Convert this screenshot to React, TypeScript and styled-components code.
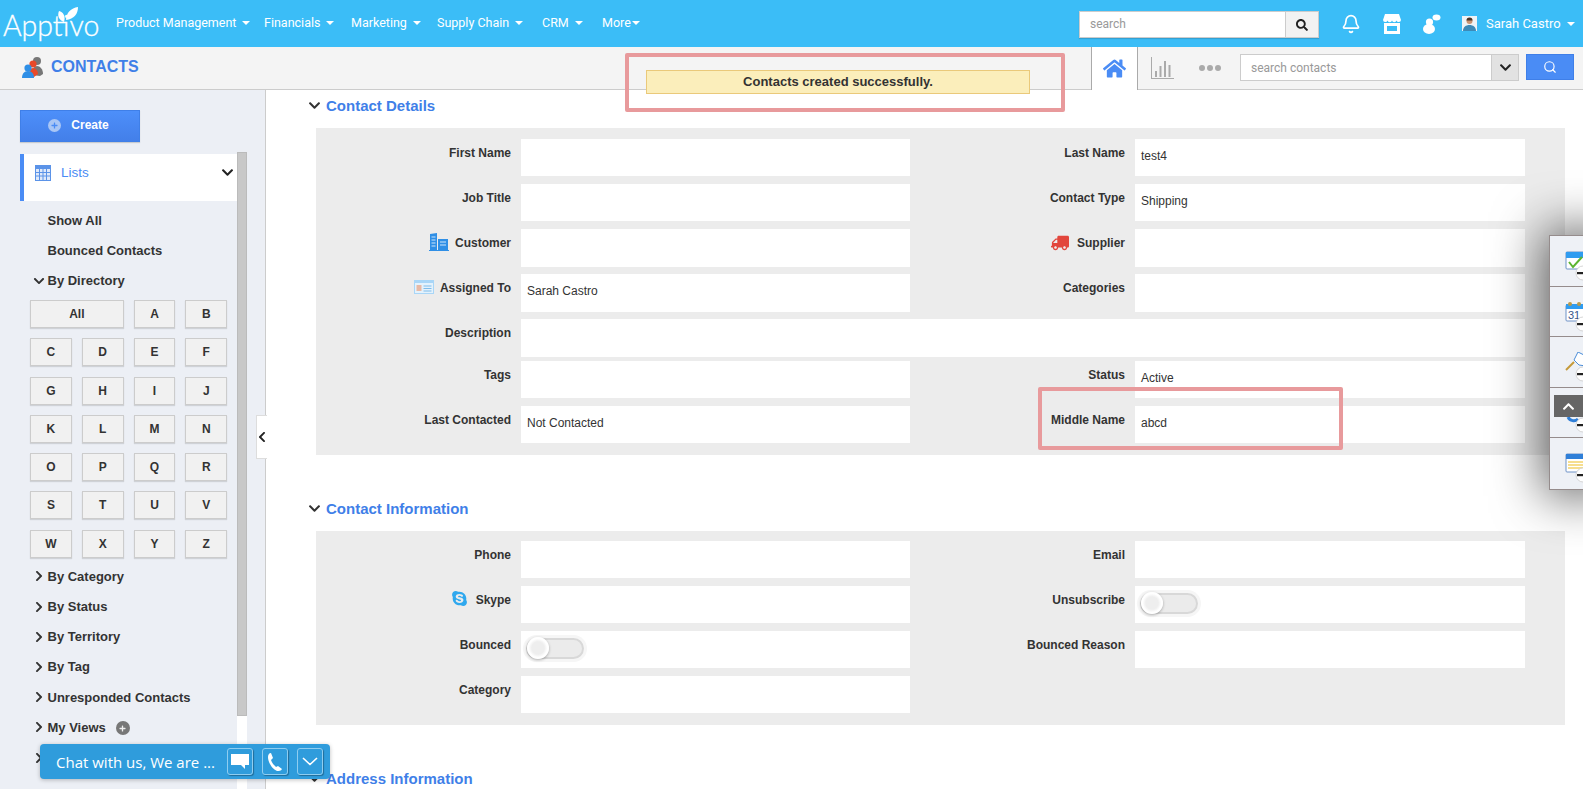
import React from 'react';
import styled, { createGlobalStyle } from 'styled-components';
import { FaChevronDown, FaChevronLeft, FaChevronRight, FaChevronUp, FaHome, FaPlus, FaSearch, FaSkype, FaTruck } from 'react-icons/fa';
import { Bell, Search } from 'lucide-react';

const Global = createGlobalStyle`
  html, body { margin: 0; padding: 0; height: 100%; background: #fff; overflow: hidden; }
  body { font-family: "Liberation Sans", Arial, sans-serif; font-size: 12px; color: #333; }
  * { box-sizing: border-box; }
`;

const Page = styled.div`
  position: relative;
  width: 1583px;
  height: 789px;
  display: flex;
  flex-direction: column;
  overflow: hidden;
`;

/* top bar */
const TopBar = styled.header`
  height: 47px;
  flex: none;
  background: #3bbdf7;
  display: flex;
  align-items: center;
  color: #fff;
`;
const Logo = styled.div`
  position: relative;
  width: 116px;
  padding: 3px 0 0 3px;
  font-family: Lato, sans-serif;
  font-weight: 300;
  font-size: 28.5px;
  line-height: 44px;
  -webkit-text-stroke: 0.3px #fff;
  svg { position: absolute; left: 57px; top: 7px; }
`;
const Nav = styled.nav`
  display: flex;
  align-items: center;
  flex: 1;
`;
const NavItem = styled.span<{ $w: number }>`
  width: ${p => p.$w}px;
  font-family: Roboto, sans-serif;
  font-size: 12.5px;
  white-space: nowrap;
  padding-bottom: 3px;
`;
const Caret = styled.i`
  display: inline-block;
  margin-left: 6px;
  vertical-align: 2px;
  border-left: 4px solid transparent;
  border-right: 4px solid transparent;
  border-top: 4px solid #fff;
`;
const MoreCaret = styled(Caret)`
  margin-left: 1px;
`;
const TopSearch = styled.div`
  width: 240px;
  height: 27px;
  margin: 2px 22px 0 0;
  display: flex;
  background: #fff;
  border: 1px solid #ccc;
  box-shadow: 0 1px 1px rgba(0,0,0,.15);
`;
const TopSearchText = styled.div`
  flex: 1;
  padding-left: 10px;
  line-height: 25px;
  font-family: Roboto, sans-serif;
  color: #999;
  font-size: 12px;
`;
const TopSearchBtn = styled.div`
  width: 33px;
  background: #f2f2f2;
  border-left: 1px solid #ccc;
  display: flex;
  align-items: center;
  justify-content: center;
  color: #222;
`;
const TopIcons = styled.div`
  display: flex;
  align-items: center;
  gap: 22px;
  width: 121px;
`;
const UserName = styled.div`
  display: flex;
  align-items: center;
  font-family: Roboto, sans-serif;
  font-size: 13px;
  gap: 9px;
  width: 121px;
  i { margin-left: -3px; vertical-align: 0; }
`;

/* second bar */
const SubBar = styled.div`
  height: 43px;
  flex: none;
  background: #f4f4f4;
  border-bottom: 1px solid #ccc;
  display: flex;
  align-items: stretch;
`;
const AppTitle = styled.div`
  display: flex;
  align-items: center;
  gap: 7px;
  padding: 0 0 2px 22px;
  width: 1091px;
  color: #3f7fe8;
  font-size: 16px;
  font-weight: bold;
`;
const HomeTab = styled.div`
  width: 47px;
  background: #fff;
  border-left: 1px solid #aaa;
  border-right: 1px solid #aaa;
  margin-bottom: -1px;
  display: flex;
  align-items: center;
  justify-content: center;
  color: #4a8cf5;
`;
const ChartTab = styled.div`
  width: 50px;
  display: flex;
  align-items: center;
  justify-content: center;
  padding-right: 2px;
`;
const DotsTab = styled.div`
  width: 52px;
  display: flex;
  align-items: center;
  gap: 2px;
  padding-left: 11px;
`;
const Dot = styled.i`
  width: 6px;
  height: 6px;
  border-radius: 50%;
  background: #aaa;
`;
const SubSearch = styled.div`
  margin-top: 7px;
  width: 279px;
  height: 27px;
  display: flex;
  border: 1px solid #ccc;
  background: #fff;
`;
const SubSearchText = styled.div`
  flex: 1;
  padding-left: 10px;
  line-height: 27px;
  font-family: Roboto, sans-serif;
  color: #999;
  font-size: 12px;
`;
const SubSearchDrop = styled.div`
  width: 27px;
  background: #e2e2e2;
  border-left: 1px solid #ccc;
  display: flex;
  align-items: center;
  justify-content: center;
  color: #222;
`;
const SubSearchBtn = styled.div`
  margin: 7px 0 0 7px;
  width: 48px;
  height: 26px;
  background: #4a8cf5;
  border: 1px solid #3f7fe8;
  display: flex;
  align-items: center;
  justify-content: center;
  color: #fff;
`;

/* body */
const Body = styled.div`
  flex: 1;
  display: flex;
  min-height: 0;
`;
const Sidebar = styled.aside`
  width: 266px;
  flex: none;
  background: #eceff5;
  border-right: 1px solid #ccc;
  padding: 20px 0 0 20px;
`;
const CreateBtn = styled.div`
  width: 120px;
  height: 32px;
  background: linear-gradient(#4d8ffa, #437fe9);
  border: 1px solid #3f7fe8;
  color: #fff;
  font-weight: bold;
  display: flex;
  align-items: center;
  justify-content: center;
  gap: 10px;
  padding: 0 3px 2px 0;
  box-shadow: 0 1px 1px rgba(0,0,0,.15);
`;
const PlusDot = styled.span<{ $bg: string; $c: string; $s: number }>`
  width: ${p => p.$s}px;
  height: ${p => p.$s}px;
  border-radius: 50%;
  background: ${p => p.$bg};
  color: ${p => p.$c};
  display: inline-flex;
  align-items: center;
  justify-content: center;
  font-size: 8px;
`;
const ViewsPlus = styled(PlusDot)`
  margin: 2px 0 0 10px;
`;
const SideBody = styled.div`
  margin-top: 12px;
  display: flex;
  align-items: flex-start;
`;
const SideList = styled.div`
  width: 217px;
  flex: none;
`;
const ListsHead = styled.div`
  height: 47px;
  background: #fff;
  border-left: 4px solid #4a8cf5;
  padding: 0 3px 10px 11px;
  display: flex;
  align-items: center;
  gap: 10px;
  color: #4a8cf5;
  font-size: 13.5px;
  span { flex: 1; }
  svg:last-child { color: #222; }
`;
const SideRow = styled.div<{ $h?: number }>`
  height: ${p => p.$h ?? 30.2}px;
  display: flex;
  align-items: center;
  padding-left: 12.5px;
  font-size: 13px;
  font-weight: bold;
  color: #333;
  white-space: nowrap;
`;
const RowChevron = styled.span`
  width: 15px;
  flex: none;
  display: flex;
  align-items: center;
  color: #333;
`;
const NoChevron = styled(SideRow)`
  padding-left: 27.5px;
`;
const ListGap = styled.div`
  height: 4px;
`;
const Letters = styled.div`
  display: grid;
  grid-template-columns: repeat(4, 41.8px);
  grid-auto-rows: 28px;
  gap: 10.3px 10px;
  margin: 4px 0 3.5px 10px;
`;
const Letter = styled.div<{ $wide?: boolean }>`
  grid-column: ${p => (p.$wide ? 'span 2' : 'auto')};
  background: #f1f1f1;
  border: 1px solid #ccc;
  box-shadow: 0 1px 1px rgba(0,0,0,.12);
  display: flex;
  align-items: center;
  justify-content: center;
  font-weight: bold;
  font-size: 12px;
  color: #333;
`;
const ScrollTrack = styled.div`
  width: 10px;
  height: 640px;
  margin-top: -2px;
  background: #fff;
`;
const ScrollThumb = styled.div`
  height: 564px;
  background: #c8c8c8;
  border: 1px solid #bbb;
`;
const Collapse = styled.div`
  position: absolute;
  left: 256px;
  top: 415px;
  width: 11px;
  height: 44px;
  background: #fff;
  border: 1px solid #ddd;
  border-right: none;
  display: flex;
  align-items: center;
  justify-content: center;
  color: #222;
`;

/* main */
const Main = styled.main`
  flex: 1;
  min-width: 0;
  padding: 5px 0 0 42px;
`;
const SectionHead = styled.h2`
  margin: 0 0 13px;
  height: 20px;
  padding-top: 1px;
  display: flex;
  align-items: center;
  gap: 5px;
  font-size: 15px;
  font-weight: bold;
  color: #3f7fe8;
  svg { color: #333; }
`;
const Panel = styled.section<{ $top: number; $bottom: number }>`
  width: 1249px;
  background: #ececec;
  padding: ${p => p.$top}px 0 ${p => p.$bottom}px;
  margin: 0 0 43px 8px;
`;
const FormRow = styled.div<{ $tight?: boolean }>`
  display: grid;
  grid-template-columns: 205px 389px 225px 390px;
  height: 37.4px;
  margin-bottom: ${p => (p.$tight ? 4 : 7.7)}px;
`;
const Label = styled.label`
  display: flex;
  justify-content: flex-end;
  align-items: flex-start;
  gap: 6px;
  padding: 7px 10px 0 0;
  font-weight: bold;
  font-size: 12px;
  line-height: 14px;
  color: #333;
  svg { flex: none; }
`;
const Field = styled.div<{ $span?: boolean }>`
  grid-column: ${p => (p.$span ? 'span 3' : 'auto')};
  background: #fff;
  padding: 0 6px 3px;
  display: flex;
  align-items: center;
  font-size: 12px;
  color: #333;
`;
const Toggle = styled.div`
  width: 64px;
  height: 27px;
  margin-left: -4px;
  border-radius: 14px;
  background: #f6f6f6;
  padding: 3px;
`;
const ToggleTrack = styled.div`
  width: 58px;
  height: 21px;
  border-radius: 11px;
  background: #ebebeb;
  border: 2px solid #d8d8d8;
  display: flex;
  align-items: center;
`;
const ToggleKnob = styled.div`
  width: 22px;
  height: 22px;
  margin-left: -1px;
  border-radius: 50%;
  background: radial-gradient(circle, #eee 40%, #fff 60%);
  box-shadow: 0 1px 3px rgba(0,0,0,.3);
`;
const TruckIcon = styled(FaTruck)`
  transform: scaleX(-1);
  margin: -2px 2px 0 0;
  color: #e2463c;
`;
const SkypeIcon = styled(FaSkype)`
  margin: -3px 2px 0 0;
  color: #2fa8ee;
`;
const BuildingSvg = styled.svg`
  margin-top: -3px;
`;
const CardSvg = styled.svg`
  margin-top: -1px;
`;

/* overlays */
const Notice = styled.div`
  position: absolute;
  left: 625px;
  top: 53px;
  width: 440px;
  height: 59px;
  border: 4px solid #e89a9c;
  border-radius: 2px;
  padding: 13px 31px 0 17px;
`;
const NoticeText = styled.div`
  height: 24px;
  background: #fbeebb;
  border: 1px solid #eac97a;
  text-align: center;
  line-height: 22px;
  font-weight: bold;
  font-size: 13px;
  color: #333;
`;
const Mark = styled.div`
  position: absolute;
  left: 1038px;
  top: 387px;
  width: 305px;
  height: 63px;
  border: 4px solid #e89a9c;
  border-radius: 2px;
`;
const Dock = styled.div`
  position: absolute;
  left: 1549px;
  top: 235px;
  width: 60px;
  height: 255px;
  background: #eef1f6;
  border: 1px solid #958c8c;
  box-shadow: 0 0 50px 6px rgba(0,0,0,.62);
`;
const DockCell = styled.div`
  height: 50.5px;
  border-bottom: 1px solid #958c8c;
  padding: 15px 0 0 15px;
  &:last-child { border-bottom: none; }
`;
const ToTop = styled.div`
  position: absolute;
  left: 1554px;
  top: 395px;
  width: 29px;
  height: 22px;
  background: #666;
  color: #fff;
  display: flex;
  align-items: center;
  justify-content: center;
`;
const Chat = styled.div`
  position: absolute;
  left: 40px;
  top: 744px;
  width: 290px;
  height: 35px;
  background: #2f9cdc;
  border-radius: 4px;
  display: flex;
  align-items: center;
  padding: 0 7px 0 16px;
  color: #fff;
  font-family: "Open Sans", sans-serif;
  font-size: 15px;
  box-shadow: 0 1px 4px rgba(0,0,0,.25);
  span { flex: 1; white-space: nowrap; }
`;
const ChatBtn = styled.div`
  width: 26px;
  height: 27px;
  margin-left: 9px;
  border: 1px solid #8fcdf0;
  border-radius: 3px;
  display: flex;
  align-items: center;
  justify-content: center;
  box-shadow: 1px 1px 1px rgba(0,0,0,.3);
`;

const Badge = () => (
  <>
    <circle cx="18" cy="22" r="7" fill="#fff" stroke="#ccc" strokeWidth="0.8" />
    <rect x="12" y="21" width="14" height="2.200" fill="#222" />
  </>
);

const ContactsIcon = () => (
  <svg width="22" height="24" viewBox="0 0 22 24">
    <circle cx="15" cy="6" r="4" fill="#777" />
    <path d="M10 20c0-6 2-9 5-9s6 3 6 8l-3 2z" fill="#777" />
    <circle cx="11" cy="9" r="3.600" fill="#e8492a" />
    <path d="M7 21c0-5 1-8 4-8s5 3 5 6l-4 3z" fill="#e8492a" />
    <circle cx="6" cy="13" r="3.600" fill="#2f8fe6" />
    <path d="M0 23c0-4 2-7 6-7s6 3 6 7z" fill="#2f8fe6" />
  </svg>
);
const StoreIcon = () => (
  <svg width="18" height="20" viewBox="0 0 18 20" fill="#fff">
    <path d="M2 0h14l2 6a2.300 2.300 0 0 1-4.500.4 2.300 2.300 0 0 1-4.500 0 2.300 2.300 0 0 1-4.500 0A2.300 2.300 0 0 1 0 6z" />
    <path d="M1 9h16v11H1zM4 12v5h10v-5z" fillRule="evenodd" />
  </svg>
);
const PeopleIcon = () => (
  <svg width="18" height="20" viewBox="0 0 18 20" fill="#fff">
    <circle cx="6.500" cy="8" r="3.600" />
    <ellipse cx="6" cy="15" rx="6" ry="5" />
    <ellipse cx="13.500" cy="3.500" rx="4" ry="3" />
  </svg>
);
const AvatarIcon = () => (
  <svg width="15" height="15" viewBox="0 0 15 15">
    <rect width="15" height="15" fill="#eef3f6" />
    <circle cx="7.500" cy="5" r="3" fill="#c99372" />
    <path d="M7.500 1.500a3 3 0 0 1 3 3H4.500a3 3 0 0 1 3-3z" fill="#4a3426" />
    <path d="M1 15c0-4 3-6 6.500-6S14 11 14 15z" fill="#3c8ab8" />
  </svg>
);
const ChartIcon = () => (
  <svg width="23" height="22" viewBox="0 0 23 22" fill="#aaa">
    <path d="M0 0h1v21h22v1H0z" />
    <rect x="4" y="14" width="2" height="6" />
    <rect x="8.500" y="9" width="2" height="11" />
    <rect x="13" y="4" width="2" height="16" />
    <rect x="17.500" y="8" width="2" height="12" />
  </svg>
);
const ListIcon = () => (
  <svg width="16" height="16" viewBox="0 0 16 16">
    <rect width="16" height="16" fill="#5b93e8" />
    <rect x="1" y="4" width="14" height="11" fill="#dfe9fa" />
    <path d="M1 7.500h14M1 11h14M4.500 4v11M8 4v11M11.500 4v11" stroke="#5b93e8" strokeWidth="1" />
  </svg>
);
const BuildingIcon = () => (
  <BuildingSvg width="20" height="18" viewBox="0 0 20 18" fill="#2f8fe6">
    <path d="M1 1l7-1v17H1z" />
    <path d="M9 6h10v11H9z" />
    <path d="M0 17h20v1H0z" />
    <path d="M2.500 4h4M2.500 7h4M2.500 10h4M2.500 13h4M11 9h6M11 12h6" stroke="#cfe6fb" strokeWidth="1" />
  </BuildingSvg>
);
const CardIcon = () => (
  <CardSvg width="20" height="14" viewBox="0 0 20 14">
    <rect width="20" height="14" fill="#a9d6f7" />
    <rect x="1" y="3" width="18" height="10" fill="#e4f2fc" />
    <rect x="2.500" y="5" width="5" height="6" fill="#e7b9a5" />
    <path d="M9.500 6h8M9.500 8.500h8M9.500 11h8" stroke="#7fbcea" strokeWidth="1" />
  </CardSvg>
);
const LeafIcon = () => (
  <svg width="22" height="16" viewBox="0 0 22 16" fill="#fff">
    <path d="M7 15C2 13 0 9 2 4c4 1 7 5 5 11z" />
    <path d="M9 13C9 6 14 1 21 0c0 7-4 12-12 13z" />
  </svg>
);

const CheckCal = () => (
  <svg width="36" height="32" viewBox="0 0 36 32">
    <rect x="1" y="1" width="34" height="17" rx="1" fill="#fff" stroke="#6f93c7" />
    <rect x="1" y="1" width="34" height="6" fill="#2f9cf0" />
    <path d="M4 11l4 5 9-10" fill="none" stroke="#5cb531" strokeWidth="2" />
    <Badge />
  </svg>
);
const NumCal = () => (
  <svg width="36" height="32" viewBox="0 0 36 32">
    <rect x="1" y="3" width="34" height="16" rx="1" fill="#fff" stroke="#6f93c7" />
    <rect x="1" y="2" width="34" height="5" fill="#2f9cf0" />
    <circle cx="5" cy="2" r="2" fill="#b99a4a" />
    <circle cx="14" cy="2" r="2" fill="#b99a4a" />
    <text x="3" y="17" fontSize="11" fontFamily="Liberation Sans" fill="#36578a">31</text>
    <Badge />
  </svg>
);
const PinIcon = () => (
  <svg width="36" height="32" viewBox="0 0 36 32">
    <path d="M1 18l8-8" stroke="#c49a3a" strokeWidth="2" />
    <path d="M9 8l4-8 8 4v10l-7-1z" fill="#fff" stroke="#4a8cd8" />
    <Badge />
  </svg>
);
const PhoneDock = () => (
  <svg width="36" height="32" viewBox="0 0 36 32">
    <path d="M3 14c2 4 7 5 10 2" fill="none" stroke="#2f7fd8" strokeWidth="3" />
    <Badge />
  </svg>
);
const NoteIcon = () => (
  <svg width="36" height="32" viewBox="0 0 36 32">
    <rect x="1" y="1" width="34" height="18" rx="1" fill="#fff" stroke="#6f93c7" />
    <rect x="1" y="1" width="34" height="5" fill="#2f7fd8" />
    <path d="M3 9h30M3 12h30M3 15h30" stroke="#f4d36a" strokeWidth="1.500" />
    <Badge />
  </svg>
);

const ChatMsg = () => (
  <svg width="18" height="15" viewBox="0 0 18 15" fill="#fff">
    <path d="M0 0h18v11h-4v4l-4-4H0z" />
  </svg>
);
const ChatPhone = () => (
  <svg width="16" height="18" viewBox="0 0 16 18" fill="#fff">
    <path d="M4 0l2 5-2 2c1 3 3 5 5 7l2-1 4 3c-1 2-3 2-5 2C5 16 1 9 1 4c0-2 1-4 3-4z" />
  </svg>
);
const ChatDown = () => (
  <svg width="16" height="9" viewBox="0 0 16 9" fill="none" stroke="#fff" strokeWidth="1.600">
    <path d="M1 1l7 6.500L15 1" />
  </svg>
);

const letters = ['C','D','E','F','G','H','I','J','K','L','M','N','O','P','Q','R','S','T','U','V','W','X','Y','Z'];
const groups = ['By Category','By Status','By Territory','By Tag','Unresponded Contacts'];

const Row = ({ a, av, b, bv, ai, bi, tight }: { a: string; av?: React.ReactNode; b?: string; bv?: React.ReactNode; ai?: React.ReactNode; bi?: React.ReactNode; tight?: boolean }) => (
  <FormRow $tight={tight}>
    <Label>{ai}{a}</Label>
    <Field>{av}</Field>
    {b && <Label>{bi}{b}</Label>}
    {b && <Field>{bv}</Field>}
  </FormRow>
);

const Switch = () => (
  <Toggle>
    <ToggleTrack><ToggleKnob /></ToggleTrack>
  </Toggle>
);

export default function App() {
  return (
    <Page>
      <Global />
      <TopBar>
        <Logo>Apptivo<LeafIcon /></Logo>
        <Nav>
          <NavItem $w={148}>Product Management<Caret /></NavItem>
          <NavItem $w={87}>Financials<Caret /></NavItem>
          <NavItem $w={86}>Marketing<Caret /></NavItem>
          <NavItem $w={105}>Supply Chain<Caret /></NavItem>
          <NavItem $w={60}>CRM<Caret /></NavItem>
          <NavItem $w={70}>More<MoreCaret /></NavItem>
        </Nav>
        <TopSearch>
          <TopSearchText>search</TopSearchText>
          <TopSearchBtn><FaSearch size={12} /></TopSearchBtn>
        </TopSearch>
        <TopIcons>
          <Bell size={20} strokeWidth={2} />
          <StoreIcon />
          <PeopleIcon />
        </TopIcons>
        <UserName><AvatarIcon />Sarah Castro <Caret /></UserName>
      </TopBar>

      <SubBar>
        <AppTitle><ContactsIcon />CONTACTS</AppTitle>
        <HomeTab><FaHome size={23} /></HomeTab>
        <ChartTab><ChartIcon /></ChartTab>
        <DotsTab><Dot /><Dot /><Dot /></DotsTab>
        <SubSearch>
          <SubSearchText>search contacts</SubSearchText>
          <SubSearchDrop><FaChevronDown size={13} /></SubSearchDrop>
        </SubSearch>
        <SubSearchBtn><Search size={14} /></SubSearchBtn>
      </SubBar>

      <Body>
        <Sidebar>
          <CreateBtn><PlusDot $bg="#a9c6f5" $c="#4a8cf5" $s={13}><FaPlus size={7} /></PlusDot>Create</CreateBtn>
          <SideBody>
            <SideList>
              <ListsHead><ListIcon /><span>Lists</span><FaChevronDown size={13} /></ListsHead>
              <ListGap />
              <NoChevron $h={30}>Show All</NoChevron>
              <NoChevron $h={30}>Bounced Contacts</NoChevron>
              <SideRow $h={31}><RowChevron><FaChevronDown size={12} /></RowChevron>By Directory</SideRow>
              <Letters>
                <Letter $wide>All</Letter>
                <Letter>A</Letter>
                <Letter>B</Letter>
                {letters.map(l => <Letter key={l}>{l}</Letter>)}
              </Letters>
              {groups.map(g => (
                <SideRow key={g}><RowChevron><FaChevronRight size={12} /></RowChevron>{g}</SideRow>
              ))}
              <SideRow>
                <RowChevron><FaChevronRight size={12} /></RowChevron>My Views
                <ViewsPlus $bg="#777" $c="#eee" $s={14}><FaPlus size={7} /></ViewsPlus>
              </SideRow>
              <SideRow><RowChevron><FaChevronRight size={12} /></RowChevron></SideRow>
            </SideList>
            <ScrollTrack><ScrollThumb /></ScrollTrack>
          </SideBody>
        </Sidebar>

        <Main>
          <SectionHead><FaChevronDown size={13} />Contact Details</SectionHead>
          <Panel $top={11} $bottom={4}>
            <Row a="First Name" b="Last Name" bv="test4" />
            <Row a="Job Title" b="Contact Type" bv="Shipping" />
            <Row a="Customer" ai={<BuildingIcon />} b="Supplier" bi={<TruckIcon size={18} />} />
            <Row a="Assigned To" ai={<CardIcon />} av="Sarah Castro" b="Categories" />
            <FormRow $tight>
              <Label>Description</Label>
              <Field $span />
            </FormRow>
            <Row a="Tags" b="Status" bv="Active" />
            <Row a="Last Contacted" av="Not Contacted" b="Middle Name" bv="abcd" />
          </Panel>

          <SectionHead><FaChevronDown size={13} />Contact Information</SectionHead>
          <Panel $top={10} $bottom={4}>
            <Row a="Phone" b="Email" />
            <Row a="Skype" ai={<SkypeIcon size={17} />} b="Unsubscribe" bv={<Switch />} />
            <Row a="Bounced" av={<Switch />} b="Bounced Reason" />
            <Row a="Category" />
          </Panel>

          <SectionHead><FaChevronDown size={13} />Address Information</SectionHead>
        </Main>
      </Body>

      <Collapse><FaChevronLeft size={12} /></Collapse>
      <Notice><NoticeText>Contacts created successfully.</NoticeText></Notice>
      <Mark />
      <Dock>
        <DockCell><CheckCal /></DockCell>
        <DockCell><NumCal /></DockCell>
        <DockCell><PinIcon /></DockCell>
        <DockCell><PhoneDock /></DockCell>
        <DockCell><NoteIcon /></DockCell>
      </Dock>
      <ToTop><FaChevronUp size={13} /></ToTop>
      <Chat>
        <span>Chat with us, We are ...</span>
        <ChatBtn><ChatMsg /></ChatBtn>
        <ChatBtn><ChatPhone /></ChatBtn>
        <ChatBtn><ChatDown /></ChatBtn>
      </Chat>
    </Page>
  );
}
